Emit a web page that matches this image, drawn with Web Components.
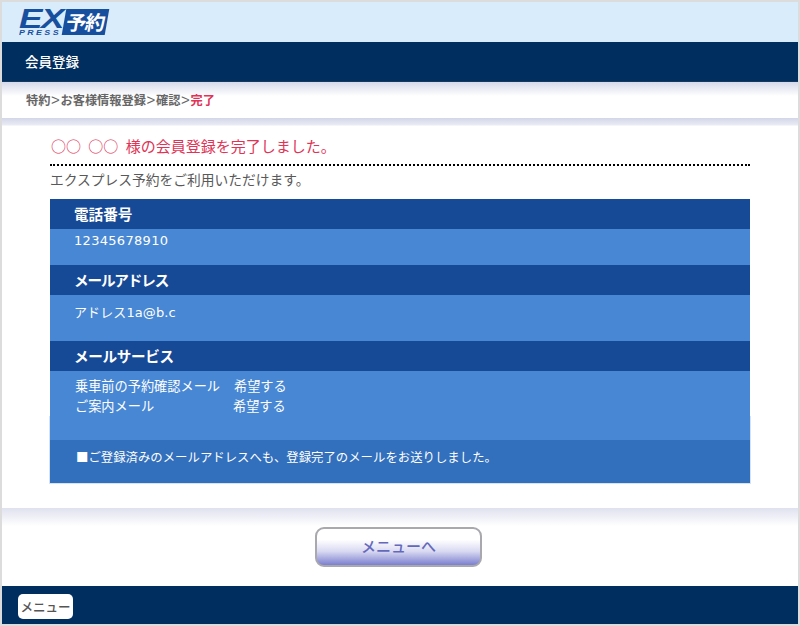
<!DOCTYPE html>
<html lang="ja">
<head>
<meta charset="utf-8">
<title>会員登録</title>
<style>
  html, body { margin: 0; background: #fff; }
  body { font-family: "Noto Sans CJK JP", "Noto Sans", sans-serif; }
</style>
</head>
<body>
<ex-page>
  <ex-header></ex-header>
  <ex-titlebar>会員登録</ex-titlebar>
  <ex-breadcrumb>特約<i>&gt;</i>お客様情報登録<i>&gt;</i>確認<i>&gt;</i><em>完了</em></ex-breadcrumb>
  <ex-main>
    <ex-lead name="○○ ○○">エクスプレス予約をご利用いただけます。</ex-lead>
    <ex-panel>
      <ex-section label="電話番号" h="36" pad="2">12345678910</ex-section>
      <ex-section label="メールアドレス" h="46" pad="8" label-track="-1.15" track=".1">アドレス1a@b.c</ex-section>
      <ex-section label="メールサービス" h="69" pad="5" label-track="-.35">
        <ex-service name="乗車前の予約確認メール" value="希望する" w="159"></ex-service>
        <ex-service name="ご案内メール" value="希望する" w="158"></ex-service>
      </ex-section>
      <ex-note>■ご登録済みのメールアドレスへも、登録完了のメールをお送りしました。</ex-note>
    </ex-panel>
  </ex-main>
  <ex-action>メニューへ</ex-action>
  <ex-footer>メニュー</ex-footer>
</ex-page>

<script>
class ExElement extends HTMLElement {
  constructor() {
    super();
    this.attachShadow({ mode: "open" });
  }
  connectedCallback() {
    this.shadowRoot.innerHTML = this._body();
  }
}

class ExPage extends ExElement {
  _body() {
    return `<style>
      :host { display: flex; flex-direction: column; box-sizing: border-box; width: 800px; height: 626px;
        border: 2px solid #dcdcdc; background: #fff; overflow: hidden; }
    </style><slot></slot>`;
  }
}

class ExHeader extends ExElement {
  _body() {
    return `<style>
      :host { display: flex; align-items: flex-start; height: 40px; padding: 7px 0 0 17px; background: #d8ecfb; box-sizing: border-box; }
      .logo { display: flex; align-items: flex-start; }
      .ex { display: flex; flex-direction: column; width: 44px; color: #174f9f; font-family: "Liberation Sans", sans-serif; font-style: italic; font-weight: 700; }
      .big { font-size: 27px; line-height: 20px; height: 20px; letter-spacing: -1px; transform: scaleX(1.3); transform-origin: left; }
      .press { font-size: 8px; line-height: 7px; letter-spacing: 2.2px; white-space: nowrap; transform: scaleX(1.1); transform-origin: left; }
      .yoyaku { display: block; width: 43px; height: 26px; margin-left: 1px; background: #174f9f; color: #fff; transform: skewX(-10deg);
        font: 700 20px/25px "Noto Sans CJK JP", sans-serif; text-align: center; letter-spacing: -1px; white-space: nowrap; }
    </style>
    <div class="logo">
      <div class="ex"><span class="big">EX</span><span class="press">PRESS</span></div>
      <span class="yoyaku">予約</span>
    </div>`;
  }
}

class ExTitlebar extends ExElement {
  _body() {
    return `<style>
      :host { display: flex; align-items: center; height: 40px; padding: 0 0 2px 23px; box-sizing: border-box;
        background: #002f5f; border-bottom: 1px solid #17375e; color: #fff; font-size: 13.5px; font-weight: 500; }
    </style><slot></slot>`;
  }
}

class ExBreadcrumb extends ExElement {
  _body() {
    return `<style>
      :host { display: flex; align-items: center; height: 36px; padding: 0 0 1px 24px; box-sizing: border-box;
        background: linear-gradient(#d6d9ea 0, #fff 14px); color: #666; font-size: 12.2px; font-weight: 700; }
      ::slotted(em) { color: #e03355; font-style: normal; }
      ::slotted(i) { padding: 0 .7px; font: 400 15px "Liberation Sans", sans-serif; }
    </style><slot></slot>`;
  }
}

class ExMain extends ExElement {
  _body() {
    return `<style>
      :host { display: block; height: 390px; padding: 7px 48px 0; box-sizing: border-box;
        background: linear-gradient(#d3d6e8 0, #e9ebf4 7px, #fff 8px); }
    </style><slot></slot>`;
  }
}

class ExLead extends ExElement {
  _body() {
    const name = this.getAttribute("name");
    return `<style>
      :host { display: block; margin-bottom: 10px; padding-top: 1px; }
      h1 { margin: 0; padding-left: 1px; height: 31px; border-bottom: 2px dotted #000; box-sizing: border-box; margin-top: 9px;
        color: #e03355; font-size: 15px; font-weight: 400; line-height: 22px; word-spacing: 4px; }
      p { margin: 0; padding-top: 3px; color: #595959; font-size: 13.75px; line-height: 20px; }
    </style>
    <h1>${name} 様の会員登録を完了しました。</h1>
    <p><slot></slot></p>`;
  }
}

class ExPanel extends ExElement {
  _body() {
    return `<style>
      :host { display: block; position: relative; isolation: isolate; background: #4887d3; }
      :host::after { content: ""; position: absolute; z-index: -1; top: 217px; left: -1px; right: -1px; bottom: -1px; background: #d5e2f2; }
    </style><slot></slot>`;
  }
}

class ExSection extends ExElement {
  _body() {
    const h = this.getAttribute("h");
    const pad = this.getAttribute("pad") || 3;
    const track = this.getAttribute("track") || ".3";
    const labelTrack = this.getAttribute("label-track") || "0";
    return `<style>
      :host { display: block; }
      h2 { margin: 0; height: 30px; padding-left: 24px; background: #174a96; color: #fff; font-size: 14.6px; font-weight: 700; line-height: 30px; letter-spacing: ${labelTrack}px; }
      .value { height: ${h}px; padding: ${pad}px 0 0 24px; box-sizing: border-box; background: #4887d3; color: #fff;
        font-family: "DejaVu Sans", "Noto Sans CJK JP", sans-serif; font-size: 13px; letter-spacing: ${track}px; line-height: 20px; }
    </style>
    <h2>${this.getAttribute("label")}</h2>
    <div class="value"><slot></slot></div>`;
  }
}

class ExService extends ExElement {
  _body() {
    return `<style>
      :host { display: flex; height: 20px; padding-left: 1px; color: #fff; font-family: "Noto Sans CJK JP", sans-serif; font-size: 13.2px; letter-spacing: 0; line-height: 20px; }
      .name { width: ${this.getAttribute("w")}px; }
    </style>
    <span class="name">${this.getAttribute("name")}</span><span>${this.getAttribute("value")}</span>`;
  }
}

class ExNote extends ExElement {
  _body() {
    return `<style>
      :host { display: block; height: 43px; padding: 7px 0 0 26px; box-sizing: border-box; background: #326fbc; color: #fff; font-size: 12.4px; line-height: 20px; }
    </style><slot></slot>`;
  }
}

class ExAction extends ExElement {
  _body() {
    return `<style>
      :host { display: flex; justify-content: flex-start; height: 78px; padding: 19px 0 0 313px; box-sizing: border-box;
        background: linear-gradient(#dfe1ee 0, #fff 18px); }
      button { width: 167px; height: 40px; padding: 0 0 3px; border: 2px solid #a9a9ad; border-radius: 9px;
        background: linear-gradient(#fff 0, #fff 30%, #d9d9f2 62%, #7b7fcf 100%);
        color: #6468bb; font: 500 15px "Noto Sans CJK JP", sans-serif; }
    </style><button><slot></slot></button>`;
  }
}

class ExFooter extends ExElement {
  _body() {
    return `<style>
      :host { display: flex; align-items: flex-start; flex: 1; padding: 8px 0 0 16px; box-sizing: border-box; background: #002f5f; }
      a { display: block; width: 55px; height: 25px; border-radius: 5px; background: #fff; color: #555; text-align: center;
        font-size: 12.5px; font-weight: 500; line-height: 25px; }
    </style><a><slot></slot></a>`;
  }
}

customElements.define("ex-page", ExPage);
customElements.define("ex-header", ExHeader);
customElements.define("ex-titlebar", ExTitlebar);
customElements.define("ex-breadcrumb", ExBreadcrumb);
customElements.define("ex-main", ExMain);
customElements.define("ex-lead", ExLead);
customElements.define("ex-panel", ExPanel);
customElements.define("ex-section", ExSection);
customElements.define("ex-service", ExService);
customElements.define("ex-note", ExNote);
customElements.define("ex-action", ExAction);
customElements.define("ex-footer", ExFooter);
</script>
</body>
</html>
